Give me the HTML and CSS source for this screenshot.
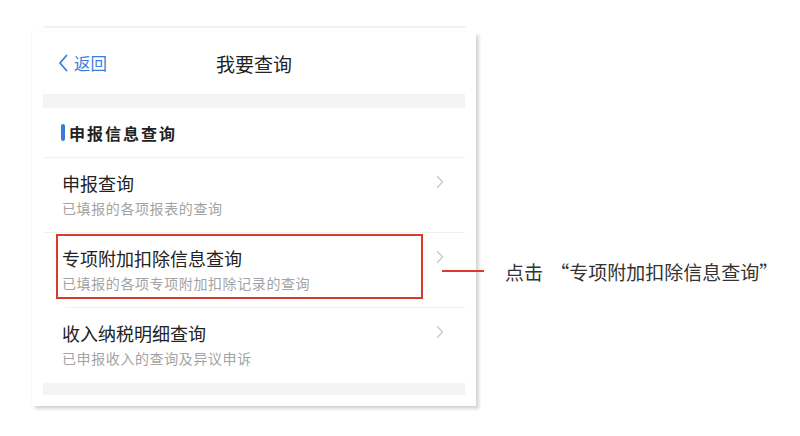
FILE: index.html
```html
<!DOCTYPE html>
<html lang="zh-CN">
<head>
<meta charset="utf-8">
<title>我要查询</title>
<link rel="stylesheet" href="styles.css">
</head>
<body>
<div class="page">
  <div class="phone">
    <div class="topline"></div>
    <div class="card">
      <div class="header">
        <a class="back"><svg class="back-icon" viewBox="0 0 10 18" width="10" height="18"><path d="M8.5 1.5 L2 9 L8.5 16.5" fill="none" stroke="#3d7ed8" stroke-width="1.8" stroke-linecap="round" stroke-linejoin="round"/></svg><span>返回</span></a>
        <div class="title">我要查询</div>
        <div></div>
      </div>
      <div class="band"></div>
      <div class="section-title"><span class="bar"></span><span>申报信息查询</span></div>
      <div class="row">
        <div class="row-text">
          <div class="row-title">申报查询</div>
          <div class="row-sub">已填报的各项报表的查询</div>
        </div>
        <svg class="chev" viewBox="0 0 8 14" width="8" height="14"><path d="M1.5 1.5 L6.5 7 L1.5 12.5" fill="none" stroke="#c8c8c8" stroke-width="1.3" stroke-linecap="round" stroke-linejoin="round"/></svg>
      </div>
      <div class="row row-marked">
        <div class="row-text">
          <div class="row-title">专项附加扣除信息查询</div>
          <div class="row-sub">已填报的各项专项附加扣除记录的查询</div>
        </div>
        <svg class="chev" viewBox="0 0 8 14" width="8" height="14"><path d="M1.5 1.5 L6.5 7 L1.5 12.5" fill="none" stroke="#c8c8c8" stroke-width="1.3" stroke-linecap="round" stroke-linejoin="round"/></svg>
        <div class="highlight"></div>
      </div>
      <div class="row row-indent">
        <div class="row-text">
          <div class="row-title">收入纳税明细查询</div>
          <div class="row-sub">已申报收入的查询及异议申诉</div>
        </div>
        <svg class="chev" viewBox="0 0 8 14" width="8" height="14"><path d="M1.5 1.5 L6.5 7 L1.5 12.5" fill="none" stroke="#c8c8c8" stroke-width="1.3" stroke-linecap="round" stroke-linejoin="round"/></svg>
      </div>
      <div class="band band-bottom"></div>
    </div>
  </div>
  <div class="callout">
    <span class="callout-line"></span>
    <span class="callout-text">点击 “专项附加扣除信息查询”</span>
  </div>
</div>
</body>
</html>
```

FILE: styles.css
```css
* { box-sizing: border-box; }
html, body { margin: 0; padding: 0; background: #fff; }
body {
  width: 800px;
  height: 436px;
  overflow: hidden;
  font-family: "Noto Sans CJK SC", "Noto Sans", sans-serif;
  color: #222;
}
.page {
  position: relative;
  display: flex;
  padding: 26px 0 0 32px;
}
.phone {
  width: 444px;
  display: flex;
  flex-direction: column;
}
.topline {
  height: 2px;
  margin: 0 10px 0 12px;
  background: #f2f3f4;
}
.card {
  margin-top: 4px;
  background: #fff;
  padding: 0 11px 11px;
  box-shadow: 3px 3px 3px rgba(0,0,0,0.16), -1px 0 2px rgba(0,0,0,0.04);
}
.header {
  height: 63px;
  display: grid;
  grid-template-columns: 1fr auto 1fr;
  align-items: center;
  border-bottom: 1px solid #f0f1f3;
}
.back {
  display: flex;
  align-items: center;
  padding-left: 15px;
  color: #3d7ed8;
  font-size: 16.5px;
  gap: 6px;
}
.title {
  font-size: 19px;
  color: #222;
}
.band {
  height: 13px;
  background: #f3f4f6;
}
.section-title {
  height: 49px;
  display: flex;
  align-items: center;
  padding-left: 18px;
  gap: 4px;
  font-size: 16px;
  font-weight: 700;
  letter-spacing: 2px;
  color: #222;
}
.bar {
  width: 4px;
  height: 17px;
  border-radius: 2px;
  background: #3a7bd8;
}
.row {
  position: relative;
  height: 75px;
  display: flex;
  align-items: center;
  padding: 0 21px 0 19px;
  border-top: 1px solid #f1f1f1;
}
.row-indent { border-top-color: transparent; }
.row-indent::before {
  content: "";
  position: absolute;
  top: -1px;
  left: 22px;
  right: 0;
  border-top: 1px solid #f1f1f1;
}
.row-text {
  flex: 1;
  display: flex;
  flex-direction: column;
  padding-bottom: 1px;
}
.row-title {
  font-size: 18px;
  line-height: 24px;
  color: #222;
}
.row-sub {
  margin-top: 3px;
  font-size: 14px;
  line-height: 20px;
  letter-spacing: 0.6px;
  color: #a3a3a3;
}
.chev {
  margin-top: -26px;
}
.highlight {
  position: absolute;
  left: 13px;
  top: 1px;
  width: 367px;
  height: 65px;
  border: 2px solid #d93a2e;
}
.band-bottom {
  height: 12px;
  margin-top: 1px;
}
.callout {
  position: absolute;
  left: 442px;
  top: 256px;
  display: flex;
  align-items: center;
  gap: 21px;
}
.callout-line {
  width: 42px;
  height: 2px;
  background: #d93a2e;
}
.callout-text {
  font-size: 19px;
  color: #333;
  line-height: 26px;
  word-spacing: 3px;
  padding-top: 3px;
}
```
